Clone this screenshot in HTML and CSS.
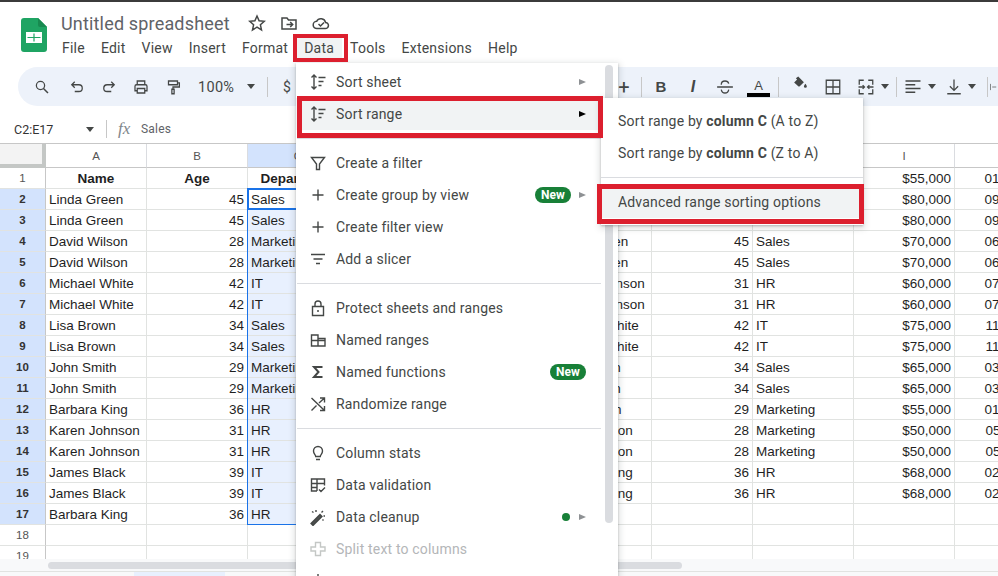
FILE: index.html
```html
<!DOCTYPE html>
<html lang="en">
<head>
<meta charset="utf-8">
<title>Untitled spreadsheet</title>
<link rel="stylesheet" href="styles.css">
</head>
<body>
<div class="strip"></div>
<header class="appbar">
  <svg class="logo" viewBox="0 0 26 34"><path fill="#1fa463" d="M3 0h14l9 9v22a3 3 0 0 1-3 3H3a3 3 0 0 1-3-3V3a3 3 0 0 1 3-3z"/><path fill="#188a50" d="M17 0l9 9h-7a2 2 0 0 1-2-2z"/><path fill="#fff" d="M5 14h16v11H5z"/><path fill="#1fa463" d="M12.400 15.500h1.200v8h-1.200zM6.500 18.900h13v1.200h-13z"/></svg>
  <div class="titlecol">
    <div class="titlerow">
      <span class="title">Untitled spreadsheet</span>
      <svg class="ti star" viewBox="0 0 18 18"><path d="M9 2l2.100 4.800 5.200.5-3.900 3.500 1.100 5.100L9 13.200l-4.500 2.700 1.100-5.100L1.700 7.300l5.200-.5z"/></svg>
      <svg class="ti" viewBox="0 0 18 18"><path d="M2 4h5l1.500 2H16v9H2z"/><path d="M6.500 10.500h6M10.200 8l2.500 2.500-2.500 2.500"/></svg>
      <svg class="ti" viewBox="0 0 18 18"><path d="M5 14.500a3.600 3.600 0 0 1-.4-7.200 4.800 4.800 0 0 1 9 1.200 3 3 0 0 1-.3 6z"/><path d="M6.500 10l2 2 3.500-3.500"/></svg>
    </div>
    <nav class="menubar">
      <span>File</span><span>Edit</span><span>View</span><span>Insert</span><span>Format</span><span class="on">Data</span><span>Tools</span><span>Extensions</span><span>Help</span>
    </nav>
  </div>
</header>

<div class="toolbar">
  <div class="tleft">
    <svg class="tb first" viewBox="0 0 24 24"><circle cx="10" cy="10" r="5.500"/><path d="M14 14l6 6" stroke-width="2"/></svg>
    <svg class="tb" viewBox="0 0 24 24"><path d="M9 5L5 9l4 4M5 9h9.500a4.500 4.500 0 0 1 0 9H9"/></svg>
    <svg class="tb" viewBox="0 0 24 24"><path d="M15 5l4 4-4 4M19 9H9.500a4.500 4.500 0 0 0 0 9H15"/></svg>
    <svg class="tb" viewBox="0 0 24 24"><path d="M7 9V4h10v5M7 17H4v-6a2 2 0 0 1 2-2h12a2 2 0 0 1 2 2v6h-3M7 14h10v6H7z"/></svg>
    <svg class="tb" viewBox="0 0 24 24"><path d="M6 4h12v5H6zM18 6.500h2.500V12H12v3M10.500 15h3v6h-3z"/></svg>
    <span class="zoomval">100%</span>
    <span class="caret"></span>
    <span class="tsep"></span>
    <span class="dollar">$</span>
  </div>
  <div class="tright">
    <span class="plus">+</span>
    <span class="tsep m3"></span>
    <b class="slot m3 bold">B</b>
    <i class="slot ital">I</i>
    <span class="slot"><svg class="tb2" viewBox="0 0 24 24"><path d="M1.500 12h21M7 9c0-3 2-5 5-5s4.500 1.500 5 3.500M7 15.500c.5 2.500 2.500 4.500 5 4.500s4.500-2 5-4.500"/></svg></span>
    <span class="colorA">A</span>
    <span class="tsep m3"></span>
    <span class="slot fillslot m4"><svg class="tb2" viewBox="0 0 24 24"><path class="solid" d="M11 2l7.500 7.500-5.500 5.500a1.500 1.500 0 0 1-2 0L5.500 10 9.500 6 7.800 4.300zM20.500 11.500s2 2.400 2 3.600a2 2 0 0 1-4 0c0-1.200 2-3.600 2-3.600z"/></svg><span class="fillbar"></span></span>
    <span class="slot m2"><svg class="tb2" viewBox="0 0 24 24"><path d="M3 3h18v18H3zM12 3v18M3 12h18"/></svg></span>
    <span class="slot m1"><svg class="tb2" viewBox="0 0 24 24"><path d="M3 9V3h6M15 3h6v6M3 15v6h6M15 21h6v-6M2 12h8M7.500 9.500L10 12l-2.500 2.500M22 12h-8M16.500 9.500L14 12l2.500 2.500"/></svg></span>
    <span class="caret cl"></span>
    <span class="tsep m7"></span>
    <span class="slot"><svg class="tb2" viewBox="0 0 24 24"><path d="M2 4h20M2 9h13M2 14h20M2 19h13"/></svg></span>
    <span class="caret cl"></span>
    <span class="slot m2"><svg class="tb2" viewBox="0 0 24 24"><path d="M12 2v14M6.500 11l5.500 5.500 5.500-5.500M3 21h18"/></svg></span>
    <span class="caret cl2"></span>
    <span class="tsep m11"></span>
    <svg class="tb3" viewBox="0 0 18 18"><path d="M1 2v14M5 9h9"/></svg>
  </div>
</div>

<div class="fbar">
  <span class="namebox">C2:E17</span>
  <span class="caret nb"></span>
  <span class="fsep"></span>
  <span class="fx">fx</span>
  <span class="fval">Sales</span>
</div>

<main class="grid">
<table class="sheet">
<colgroup><col class="chd"><col span="10" class="cw"></colgroup>
<thead><tr><th class="corner"></th><th>A</th><th>B</th><th class="s">C</th><th class="s">D</th><th class="s">E</th><th>F</th><th>G</th><th>H</th><th>I</th><th>J</th></tr></thead>
<tbody>
<tr><th>1</th><td class="h">Name</td><td class="h">Age</td><td class="h">Department</td><td></td><td></td><td></td><td></td><td></td><td class="n">$55,000</td><td class="n">01/15/2019</td></tr>
<tr class="r"><th>2</th><td>Linda Green</td><td class="n">45</td><td class="s first">Sales</td><td class="s"></td><td class="s"></td><td></td><td></td><td></td><td class="n">$80,000</td><td class="n">09/12/2018</td></tr>
<tr class="r"><th>3</th><td>Linda Green</td><td class="n">45</td><td class="s">Sales</td><td class="s"></td><td class="s"></td><td></td><td></td><td></td><td class="n">$80,000</td><td class="n">09/12/2018</td></tr>
<tr class="r"><th>4</th><td>David Wilson</td><td class="n">28</td><td class="s">Marketing</td><td class="s"></td><td class="s"></td><td>Linda Green</td><td class="n">45</td><td>Sales</td><td class="n">$70,000</td><td class="n">06/20/2017</td></tr>
<tr class="r"><th>5</th><td>David Wilson</td><td class="n">28</td><td class="s">Marketing</td><td class="s"></td><td class="s"></td><td>Linda Green</td><td class="n">45</td><td>Sales</td><td class="n">$70,000</td><td class="n">06/20/2017</td></tr>
<tr class="r"><th>6</th><td>Michael White</td><td class="n">42</td><td class="s">IT</td><td class="s"></td><td class="s"></td><td>Karen Johnson</td><td class="n">31</td><td>HR</td><td class="n">$60,000</td><td class="n">07/01/2020</td></tr>
<tr class="r"><th>7</th><td>Michael White</td><td class="n">42</td><td class="s">IT</td><td class="s"></td><td class="s"></td><td>Karen Johnson</td><td class="n">31</td><td>HR</td><td class="n">$60,000</td><td class="n">07/01/2020</td></tr>
<tr class="r"><th>8</th><td>Lisa Brown</td><td class="n">34</td><td class="s">Sales</td><td class="s"></td><td class="s"></td><td>Michael White</td><td class="n">42</td><td>IT</td><td class="n">$75,000</td><td class="n">11/05/2016</td></tr>
<tr class="r"><th>9</th><td>Lisa Brown</td><td class="n">34</td><td class="s">Sales</td><td class="s"></td><td class="s"></td><td>Michael White</td><td class="n">42</td><td>IT</td><td class="n">$75,000</td><td class="n">11/05/2016</td></tr>
<tr class="r"><th>10</th><td>John Smith</td><td class="n">29</td><td class="s">Marketing</td><td class="s"></td><td class="s"></td><td>Lisa Brown</td><td class="n">34</td><td>Sales</td><td class="n">$65,000</td><td class="n">03/14/2019</td></tr>
<tr class="r"><th>11</th><td>John Smith</td><td class="n">29</td><td class="s">Marketing</td><td class="s"></td><td class="s"></td><td>Lisa Brown</td><td class="n">34</td><td>Sales</td><td class="n">$65,000</td><td class="n">03/14/2019</td></tr>
<tr class="r"><th>12</th><td>Barbara King</td><td class="n">36</td><td class="s">HR</td><td class="s"></td><td class="s"></td><td>John Smith</td><td class="n">29</td><td>Marketing</td><td class="n">$55,000</td><td class="n">01/15/2019</td></tr>
<tr class="r"><th>13</th><td>Karen Johnson</td><td class="n">31</td><td class="s">HR</td><td class="s"></td><td class="s"></td><td>David Wilson</td><td class="n">28</td><td>Marketing</td><td class="n">$50,000</td><td class="n">05/11/2021</td></tr>
<tr class="r"><th>14</th><td>Karen Johnson</td><td class="n">31</td><td class="s">HR</td><td class="s"></td><td class="s"></td><td>David Wilson</td><td class="n">28</td><td>Marketing</td><td class="n">$50,000</td><td class="n">05/11/2021</td></tr>
<tr class="r"><th>15</th><td>James Black</td><td class="n">39</td><td class="s">IT</td><td class="s"></td><td class="s"></td><td>Barbara King</td><td class="n">36</td><td>HR</td><td class="n">$68,000</td><td class="n">02/28/2018</td></tr>
<tr class="r"><th>16</th><td>James Black</td><td class="n">39</td><td class="s">IT</td><td class="s"></td><td class="s"></td><td>Barbara King</td><td class="n">36</td><td>HR</td><td class="n">$68,000</td><td class="n">02/28/2018</td></tr>
<tr class="r"><th>17</th><td>Barbara King</td><td class="n">36</td><td class="s">HR</td><td class="s"></td><td class="s"></td><td></td><td></td><td></td><td></td><td></td></tr>
<tr><th>18</th><td></td><td></td><td></td><td></td><td></td><td></td><td></td><td></td><td></td><td></td></tr>
<tr><th>19</th><td></td><td></td><td></td><td></td><td></td><td></td><td></td><td></td><td></td><td></td></tr>
</tbody>
</table>
<div class="selbox"></div>
<div class="activebox"></div>
</main>

<div class="hscroll"><div class="hthumb"></div></div>
<div class="tabs"><div class="tab"></div></div>

<div class="menu">
  <div class="mi"><svg class="mic" viewBox="0 0 18 18"><path d="M5 2v14M2.500 4.500L5 2l2.500 2.500M2.500 13.500L5 16l2.500-2.500M9.500 4.500h7M9.500 8.500h5M9.500 12.500h3"/></svg><span class="ml">Sort sheet</span><span class="arr"></span></div>
  <div class="mi hot"><svg class="mic" viewBox="0 0 18 18"><path d="M5 2v14M2.500 4.500L5 2l2.500 2.500M2.500 13.500L5 16l2.500-2.500M9.500 4.500h7M9.500 8.500h5M9.500 12.500h3"/></svg><span class="ml">Sort range</span><span class="arr dark"></span></div>
  <hr class="msep">
  <div class="mi"><svg class="mic" viewBox="0 0 18 18"><path d="M2.500 3.500h13L10.500 10v5.500h-3V10z"/></svg><span class="ml">Create a filter</span></div>
  <div class="mi"><svg class="mic" viewBox="0 0 18 18"><path d="M9 3.500v11M3.500 9h11"/></svg><span class="ml">Create group by view</span><span class="new">New</span><span class="arr"></span></div>
  <div class="mi"><svg class="mic" viewBox="0 0 18 18"><path d="M9 3.500v11M3.500 9h11"/></svg><span class="ml">Create filter view</span></div>
  <div class="mi"><svg class="mic" viewBox="0 0 18 18"><path d="M2 4.500h14M4.500 9h9M7 13.500h4"/></svg><span class="ml">Add a slicer</span></div>
  <hr class="msep">
  <div class="mi"><svg class="mic" viewBox="0 0 18 18"><path d="M3.500 7.500h11v9h-11zM6 7.500V5a3 3 0 0 1 6 0v2.500"/><circle class="solid" cx="9" cy="12" r="1"/></svg><span class="ml">Protect sheets and ranges</span></div>
  <div class="mi"><svg class="mic" viewBox="0 0 18 18"><path d="M2.500 4h6.500v11H2.500zM9 7.500h7V15H9zM2.500 9.500H16M9 7.500V15"/></svg><span class="ml">Named ranges</span></div>
  <div class="mi"><svg class="mic" viewBox="0 0 18 18"><path class="thick" d="M13.500 4H5l4.500 5L5 14h8.500"/></svg><span class="ml">Named functions</span><span class="new last">New</span></div>
  <div class="mi"><svg class="mic" viewBox="0 0 18 18"><path d="M2.500 3l13 12.500M11 15.500h4.500V11M2.500 15.500L7.500 10.500M10 8l5.500-5M11 3h4.500v4.500"/></svg><span class="ml">Randomize range</span></div>
  <hr class="msep">
  <div class="mi"><svg class="mic" viewBox="0 0 18 18"><path d="M6.700 12.500c0-1.500-2.200-2.500-2.200-5.500a4.500 4.500 0 0 1 9 0c0 3-2.200 4-2.200 5.500zM7 15.500h4"/></svg><span class="ml">Column stats</span></div>
  <div class="mi"><svg class="mic" viewBox="0 0 18 18"><path d="M8 15H2.500V3h13v6.500M2.500 7.500h13M2.500 11.500H8M8 3v12M10 13.500l2 2 4-4"/></svg><span class="ml">Data validation</span></div>
  <div class="mi"><svg class="mic" viewBox="0 0 18 18"><path class="thick" d="M2.500 15.500l8.500-8.500 1.500 1.500L4 17z"/><path d="M3 3.500l1.500 1M7 2v2M14 3l-1.500 1.500M16 8h-1.500M14.500 12.500l-1-1"/></svg><span class="ml">Data cleanup</span><span class="dot"></span><span class="arr"></span></div>
  <div class="mi off"><svg class="mic" viewBox="0 0 18 18"><path d="M6.500 2.500h5v4.500H16v4h-4.500v4.500h-5V11H2V7h4.500z"/></svg><span class="ml">Split text to columns</span></div>
  <div class="mi"><svg class="mic" viewBox="0 0 18 18"><path d="M9 2v14"/></svg></div>
  <div class="mthumb"></div>
</div>

<div class="submenu">
  <div class="si">Sort range by <b>column C</b> (A to Z)</div>
  <div class="si">Sort range by <b>column C</b> (Z to A)</div>
  <hr class="ssep">
  <div class="si hot">Advanced range sorting options</div>
</div>

<div class="mark mark-data"></div>
<div class="mark mark-range"></div>
<div class="mark mark-adv"></div>
</body>
</html>
```
FILE: styles.css
```css
* { box-sizing: border-box; }
html, body { margin: 0; height: 100%; overflow: hidden; }
body { position: relative; width: 998px; height: 576px; background: #fff; font-family: Roboto, "Liberation Sans", sans-serif; color: #444746; }

.strip { height: 2px; background: #3b3b3b; }

.appbar { display: flex; height: 65px; padding: 16px 0 0 21px; }
.logo { width: 26px; height: 34px; flex: none; }
.titlecol { margin-left: 7px; }
.titlerow { display: flex; align-items: center; height: 24px; margin-top: -7px; padding-left: 7px; }
.title { font-size: 18px; color: #5f6368; width: 187px; letter-spacing: 0.17px; white-space: nowrap; }
.ti { width: 18px; height: 18px; fill: none; stroke: #444746; stroke-width: 1.5; margin-right: 14px; }
.menubar { display: flex; margin-top: -1px; font-size: 14px; letter-spacing: 0.23px; color: #444746; height: 28px; align-items: center; }
.menubar span { padding: 0 8px; white-space: nowrap; line-height: 24px; }
.menubar .on { background: #f1f3f4; }

.toolbar { display: flex; align-items: center; height: 39px; margin-left: 18px; background: #edf2fa; border-radius: 20px 0 0 20px; }
.tleft { display: flex; align-items: center; width: 592px; flex: none; }
.tright { display: flex; align-items: center; width: 388px; flex: none; }
.tb { width: 18px; height: 18px; flex: none; fill: none; stroke: #444746; stroke-width: 1.7; margin-right: 14px; }
.tb.first { margin-left: 15px; margin-right: 17px; }
.tb2 { width: 18px; height: 18px; fill: none; stroke: #444746; stroke-width: 1.7; }
.tb3 { width: 8px; height: 18px; fill: none; stroke: #444746; stroke-width: 1.5; margin-left: 2px; flex: none; }
.solid { fill: #444746; stroke: none; }
.zoomval { font-size: 14.500px; letter-spacing: 0.3px; margin: 2px 0 0 2px; width: 49px; }
.caret { width: 0; height: 0; border: 4.500px solid transparent; border-top: 5px solid #444746; border-bottom: 0; flex: none; margin-right: 12px; }
.caret.cl { margin-left: -1px; margin-right: 0; }
.caret.cl2 { margin-left: -2px; margin-right: 0; }
.tsep { width: 1px; height: 20px; background: #c7c7c7; flex: none; margin-right: 15px; }
.tright .tsep { margin-right: 0; }
.dollar { font-size: 14px; }
.plus { font-size: 20px; width: 28px; text-align: center; line-height: 1; flex: none; }
.slot { display: flex; align-items: center; justify-content: center; width: 32px; height: 24px; flex: none; font: 15px "Liberation Sans", sans-serif; }
.m1 { margin-left: 1px; }
.m2 { margin-left: 2px; }
.m3 { margin-left: 3px; }
.m4 { margin-left: 4px; }
.m7 { margin-left: 7px; }
.m11 { margin-left: 11px; }
.bold { font-weight: bold; }
.ital { font-weight: bold; font-size: 16px; font-style: italic; }
.colorA { display: block; width: 23px; margin: 3px 5px 0 6px; flex: none; border-bottom: 4px solid #000; font: 13px/14px "Liberation Sans", sans-serif; text-align: center; }
.fillslot { position: relative; }
.fillslot .tb2 { margin-top: -6px; }
.fillbar { position: absolute; left: 5px; bottom: -3px; width: 23px; height: 4px; background: #fff; }

.fbar { display: flex; align-items: center; height: 37px; padding: 9px 0 0 14px; font-size: 12px; }
.namebox { width: 72px; font-size: 12.500px; color: #333; }
.caret.nb { margin-right: 12px; }
.fsep { width: 1px; height: 18px; background: #c7c7c7; margin-right: 11px; }
.fx { font: italic 17px "Liberation Serif", serif; color: #80868b; width: 23px; }
.fval { color: #5f6368; letter-spacing: 0.2px; }

.grid { position: relative; height: 416px; border-top: 1px solid #c7c7c7; overflow: hidden; }
.sheet { border-collapse: separate; border-spacing: 0; table-layout: fixed; width: 1056px; font: 13.500px "Liberation Sans", sans-serif; color: #1f1f1f; }
.chd { width: 46px; }
.cw { width: 101px; }
.sheet thead th { height: 24px; font-weight: 400; font-size: 11.500px; color: #555; background: #fff; border-right: 1px solid #dadce0; border-bottom: 1px solid #c7c7c7; padding: 0; }
.sheet thead th.s { background: #d3e3fd; }
.sheet thead th.corner { background: #f3f3f3; border-right: 4px solid #c4c7c5; border-bottom: 4px solid #c4c7c5; }
.sheet tbody th { height: 21px; padding: 0; font-weight: 400; font-size: 11.500px; color: #555; background: #fff; border-right: 1px solid #c7c7c7; border-bottom: 1px solid #e1e3e1; }
.sheet tbody tr.r th { background: #d3e3fd; font-weight: 700; color: #333; }
.sheet td { height: 21px; padding: 0 3px; border-right: 1px solid #e1e3e1; border-bottom: 1px solid #e1e3e1; white-space: nowrap; overflow: hidden; }
.sheet td.n { text-align: right; }
.sheet td.h { font-weight: 700; text-align: center; }
.sheet td.s { background: #e8f0fe; }
.sheet td.first { background: #fff; }
.selbox { position: absolute; left: 247px; top: 44px; width: 304px; height: 337px; border: 1px solid #1a73e8; }
.activebox { position: absolute; left: 247px; top: 44px; width: 102px; height: 22px; border: 2px solid #1a73e8; }

.hscroll { height: 13px; padding: 3px 0 0 48px; border-bottom: 1px solid #e1e3e1; background: #f8f9fa; }
.hthumb { width: 634px; height: 7px; border-radius: 4px; background: #dadce0; }
.tabs { height: 10px; padding-left: 134px; background: #f8f9fa; }
.tab { width: 91px; height: 10px; background: #e8f0fe; }

.menu { position: absolute; left: 296px; top: 63px; width: 322px; height: 540px; padding-top: 3px; background: #fff; box-shadow: 0 2px 6px 2px rgba(60,64,67,.15), 0 1px 2px rgba(60,64,67,.3); font-size: 14px; letter-spacing: 0.17px; color: #444746; }
.mi { position: relative; display: flex; align-items: center; width: 305px; height: 32px; padding: 0 15px 0 13px; white-space: nowrap; }
.mi.hot { background: #f1f3f4; }
.mi.off { color: #b4b6b8; }
.mic { width: 18px; height: 18px; flex: none; fill: none; stroke: #444746; stroke-width: 1.4; margin-right: 9px; }
.mi.off .mic { stroke: #c4c7c5; }
.thick { stroke-width: 2; }
.ml { flex: 1; }
.arr { width: 0; height: 0; border-left: 7px solid #8e9194; border-top: 3.500px solid transparent; border-bottom: 3.500px solid transparent; margin-left: 8px; flex: none; }
.arr.dark { border-left-color: #000; }
.new { width: 36px; height: 16px; line-height: 16px; border-radius: 8px; background: #188038; color: #fff; font-size: 12px; font-weight: 700; text-align: center; letter-spacing: 0; flex: none; }
.dot { width: 8px; height: 8px; border-radius: 50%; background: #188038; flex: none; margin-right: 1px; }
.msep { height: 1px; margin: 8px 0 8px 1px; width: 304px; border: 0; background: #dadce0; }
.mthumb { position: absolute; left: 309px; top: 2px; width: 8px; height: 458px; border-radius: 4px; background: #dadce0; }

.submenu { position: absolute; left: 601px; top: 98px; width: 262px; height: 127px; padding-top: 7px; background: #fff; box-shadow: 0 2px 6px 2px rgba(60,64,67,.15), 0 1px 2px rgba(60,64,67,.3); font-size: 14px; letter-spacing: 0.17px; color: #444746; }
.si { height: 32px; line-height: 32px; padding-left: 17px; white-space: nowrap; }
.si.hot { background: #f1f3f4; }
.ssep { height: 1px; margin: 8px 0; border: 0; background: #dadce0; }

.mark { position: absolute; border-style: solid; border-color: #dc1f2e; }
.mark-data { left: 293px; top: 34px; width: 55px; height: 28px; border-width: 4px; }
.mark-range { left: 297px; top: 96px; width: 306px; height: 42px; border-width: 5px; }
.mark-adv { left: 597px; top: 184px; width: 267px; height: 40px; border-width: 5px; }
```
